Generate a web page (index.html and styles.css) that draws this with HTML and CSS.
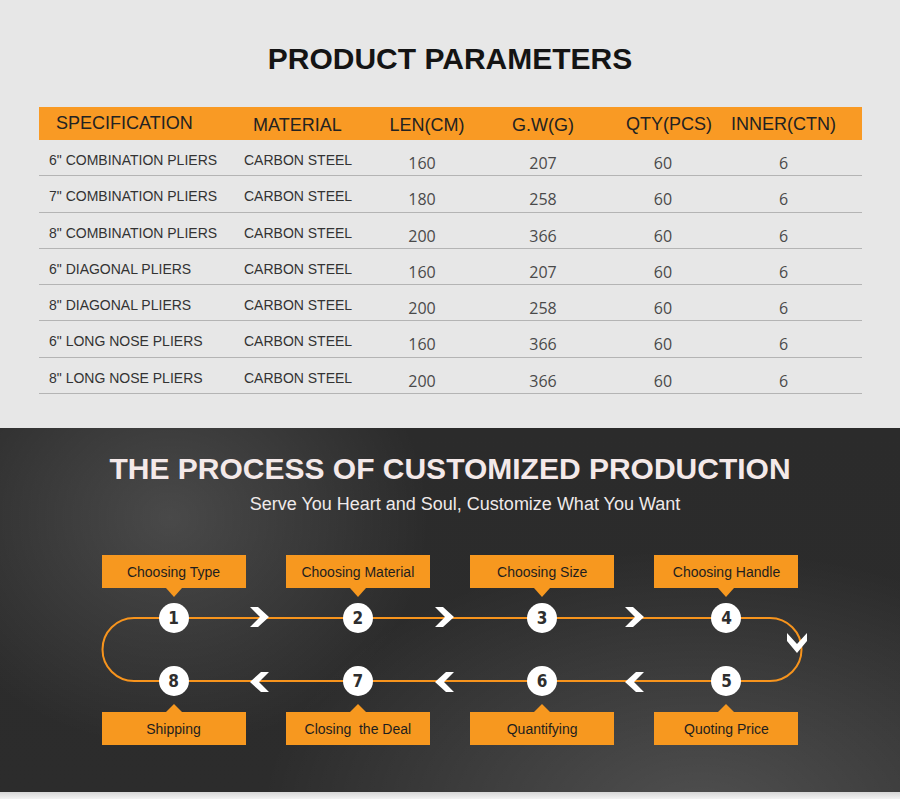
FILE: index.html
```html
<!DOCTYPE html>
<html lang="en">
<head>
<meta charset="utf-8">
<title>Product Parameters</title>
<link rel="stylesheet" href="styles.css">
</head>
<body>
<section class="params">
  <h1 class="params-title">PRODUCT PARAMETERS</h1>
  <div class="table">
    <div class="row head">
      <span class="h-spec">SPECIFICATION</span>
      <span class="h-mat">MATERIAL</span>
      <span class="h-num h-len">LEN(CM)</span>
      <span class="h-num h-gw">G.W(G)</span>
      <span class="h-num h-qty">QTY(PCS)</span>
      <span class="h-num h-inner">INNER(CTN)</span>
    </div>
    <div class="row item"><span class="spec">6" COMBINATION PLIERS</span><span class="mat">CARBON STEEL</span><span class="num">160</span><span class="num">207</span><span class="num">60</span><span class="num">6</span></div>
    <div class="row item"><span class="spec">7" COMBINATION PLIERS</span><span class="mat">CARBON STEEL</span><span class="num">180</span><span class="num">258</span><span class="num">60</span><span class="num">6</span></div>
    <div class="row item"><span class="spec">8" COMBINATION PLIERS</span><span class="mat">CARBON STEEL</span><span class="num">200</span><span class="num">366</span><span class="num">60</span><span class="num">6</span></div>
    <div class="row item"><span class="spec">6" DIAGONAL PLIERS</span><span class="mat">CARBON STEEL</span><span class="num">160</span><span class="num">207</span><span class="num">60</span><span class="num">6</span></div>
    <div class="row item"><span class="spec">8" DIAGONAL PLIERS</span><span class="mat">CARBON STEEL</span><span class="num">200</span><span class="num">258</span><span class="num">60</span><span class="num">6</span></div>
    <div class="row item"><span class="spec">6" LONG NOSE PLIERS</span><span class="mat">CARBON STEEL</span><span class="num">160</span><span class="num">366</span><span class="num">60</span><span class="num">6</span></div>
    <div class="row item"><span class="spec">8" LONG NOSE PLIERS</span><span class="mat">CARBON STEEL</span><span class="num">200</span><span class="num">366</span><span class="num">60</span><span class="num">6</span></div>
  </div>
</section>

<section class="process">
  <h2 class="process-title">THE PROCESS OF CUSTOMIZED PRODUCTION</h2>
  <p class="process-sub">Serve You Heart and Soul, Customize What You Want</p>
  <div class="flow">
    <svg class="track" width="706" height="190" viewBox="0 0 706 190">
      <path d="M32 63 H668 A31.5 31.5 0 0 1 668 126 H32 A31.5 31.5 0 0 1 32 63 Z" fill="none" stroke="#f7941d" stroke-width="2"/>
      <g fill="#ffffff">
        <polygon points="148,52 156,52 167,62 156,72 148,72 158,62"/>
        <polygon points="333,52 341,52 352,62 341,72 333,72 343,62"/>
        <polygon points="523,52 531,52 542,62 531,72 523,72 533,62"/>
        <polygon points="167,117 159,117 148,127 159,137 167,137 157,127"/>
        <polygon points="352,117 344,117 333,127 344,137 352,137 342,127"/>
        <polygon points="542,117 534,117 523,127 534,137 542,137 532,127"/>
        <polygon points="685,78 685,86 695,98 705,86 705,78 695,89"/>
      </g>
    </svg>
    <div class="steps steps-top">
      <div class="box box-down">Choosing Type</div>
      <div class="box box-down">Choosing Material</div>
      <div class="box box-down">Choosing Size</div>
      <div class="box box-down">Choosing Handle</div>
    </div>
    <div class="nodes nodes-top">
      <span class="node">1</span>
      <span class="node">2</span>
      <span class="node">3</span>
      <span class="node">4</span>
    </div>
    <div class="nodes nodes-bottom">
      <span class="node">8</span>
      <span class="node">7</span>
      <span class="node">6</span>
      <span class="node">5</span>
    </div>
    <div class="steps steps-bottom">
      <div class="box box-up">Shipping</div>
      <div class="box box-up">Closing&nbsp; the Deal</div>
      <div class="box box-up">Quantifying</div>
      <div class="box box-up">Quoting Price</div>
    </div>
  </div>
</section>
<div class="strip"></div>
</body>
</html>
```

FILE: styles.css
```css
html, body {
  margin: 0;
  padding: 0;
}
body {
  width: 900px;
  background: #e7e7e7;
  font-family: "Liberation Sans", Arial, sans-serif;
}

/* ---------- parameters ---------- */
.params {
  height: 428px;
  box-sizing: border-box;
  padding-top: 41px;
  background: #e7e7e7;
}
.params-title {
  margin: 0;
  text-align: center;
  font-size: 30px;
  line-height: 36px;
  font-weight: bold;
  color: #141414;
}
.table {
  width: 823px;
  margin: 30px 0 0 39px;
}
.row {
  display: grid;
  grid-template-columns: 195px 136px 104px 138px 102px 139px 9px;
  align-items: start;
}
.head {
  height: 33px;
  background: #f99a24;
  font-size: 18px;
  line-height: 20px;
  color: #222;
}
.head span { padding-top: 7px; }
.h-spec { padding-left: 17px; padding-top: 6px !important; }
.h-mat { padding-left: 19px; padding-top: 8px !important; }
.h-num { text-align: center; }
.h-len { padding-left: 10px; padding-top: 8px !important; }
.h-gw { padding-top: 8px !important; }
.h-qty { padding-left: 12px; }

.item {
  height: 36.3px;
  box-sizing: border-box;
  border-bottom: 1px solid #b4b4b4;
}
.spec, .mat {
  padding: 12px 0 0 10px;
  font-size: 14px;
  line-height: 16px;
  color: #333;
  white-space: nowrap;
}
.num {
  padding-top: 13px;
  text-align: center;
  font-family: "Open Sans", "Liberation Sans", sans-serif;
  font-size: 16px;
  line-height: 20px;
  color: #4a4a4a;
}

/* ---------- process ---------- */
.process {
  height: 364px;
  box-sizing: border-box;
  padding-top: 23px;
  background:
    radial-gradient(ellipse 260px 230px at 170px 90px, rgba(255,255,255,0.14), rgba(255,255,255,0) 100%),
    radial-gradient(ellipse 440px 270px at 700px 390px, rgba(255,255,255,0.17), rgba(255,255,255,0) 100%),
    linear-gradient(180deg, #2b2b2b 0%, #2c2c2c 100%);
}
.process-title {
  margin: 0;
  text-align: center;
  font-size: 30px;
  line-height: 36px;
  font-weight: bold;
  color: #f4e9e9;
}
.process-sub {
  margin: 6px 0 0;
  padding-left: 30px;
  text-align: center;
  font-size: 18px;
  line-height: 22px;
  color: #efeaea;
}
.flow {
  position: relative;
  width: 697px;
  margin: 40px auto 0;
}
.track {
  position: absolute;
  left: 0;
  top: 0;
  overflow: visible;
}
.steps, .nodes {
  position: relative;
  display: grid;
  grid-template-columns: repeat(4, 144px);
  justify-content: space-between;
}
.box {
  position: relative;
  height: 33px;
  display: flex;
  align-items: center;
  justify-content: center;
  background: #f7981f;
  color: #1e1e1e;
  font-size: 14px;
  white-space: nowrap;
}
.box-down::after {
  content: "";
  position: absolute;
  left: 50%;
  top: 100%;
  margin-left: -8px;
  border-left: 8px solid transparent;
  border-right: 8px solid transparent;
  border-top: 9px solid #f7981f;
}
.box-up::before {
  content: "";
  position: absolute;
  left: 50%;
  bottom: 100%;
  margin-left: -8px;
  border-left: 8px solid transparent;
  border-right: 8px solid transparent;
  border-bottom: 8px solid #f7981f;
}
.nodes-top { margin-top: 15px; }
.nodes-bottom { margin-top: 33px; }
.steps-bottom { margin-top: 16px; }
.node {
  justify-self: center;
  width: 30px;
  height: 30px;
  border-radius: 50%;
  background: #fff;
  display: flex;
  align-items: center;
  justify-content: center;
  font-family: "DejaVu Sans Condensed", "DejaVu Sans", sans-serif;
  font-weight: bold;
  font-size: 17px;
  color: #2e2e2e;
}
.strip {
  height: 7px;
  background: linear-gradient(180deg, #d6d6d6, #f3f3f3);
}
```
